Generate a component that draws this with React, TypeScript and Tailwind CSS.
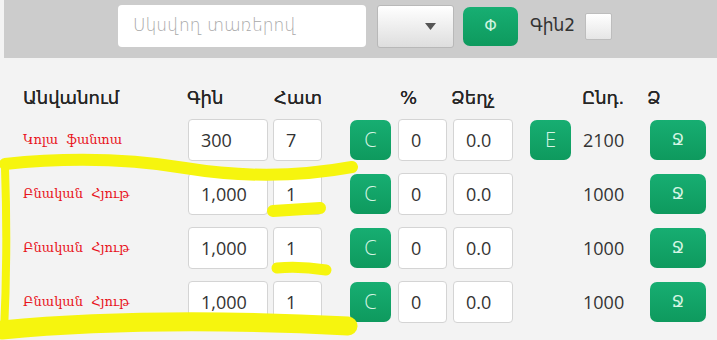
import React from "react";

type Row = {
  name: string;
  price: string;
  qty: string;
  total: string;
  extra?: boolean;
};

const rows: Row[] = [
  { name: "Կոլա  ֆանտա", price: "300", qty: "7", total: "2100", extra: true },
  { name: "Բնական  Հյութ", price: "1,000", qty: "1", total: "1000" },
  { name: "Բնական  Հյութ", price: "1,000", qty: "1", total: "1000" },
  { name: "Բնական  Հյութ", price: "1,000", qty: "1", total: "1000" },
];

const num = "font-['Open_Sans','DejaVu_Sans',sans-serif] text-[18px] text-[#333]";
const arm = "font-['DejaVu_Sans',sans-serif]";

function Box({ value, width }: { value: string; width: string }) {
  return (
    <div
      className={`${width} h-[42px] bg-white border border-[#d4d4d4] rounded-[4px] flex items-center pl-[12px] ${num}`}
    >
      {value}
    </div>
  );
}

function GreenBtn({ label, width, small }: { label: string; width: string; small?: boolean }) {
  return (
    <div
      className={`${width} h-[40px] rounded-[7px] bg-gradient-to-b from-[#17ae72] to-[#0e9a5e] flex items-center justify-center text-[#d6f5e4] ${
        small ? `${arm} text-[16px]` : "font-['Open_Sans',sans-serif] font-light text-[20px]"
      }`}
    >
      {label}
    </div>
  );
}

export default function App() {
  return (
    <div className="relative w-[717px] h-[340px] bg-[#f3f3f3] overflow-hidden">
      {/* toolbar */}
      <div className="ml-[4px] h-[58px] bg-[#cccccc]">
        <div className="h-[52px] flex items-center pl-[114px]">
          <div className={`w-[248px] h-[42px] bg-white rounded-[4px] flex items-center pl-[15px] text-[17px] text-[#a8a8a8] font-light ${arm}`}>
            Սկսվող տառերով
          </div>
          <div className="ml-[11px] w-[77px] h-[43px] rounded-[3px] border border-[#b8b8b8] bg-gradient-to-b from-white to-[#dedede] flex items-center justify-end pr-[17px]">
            <svg width="11" height="7" viewBox="0 0 11 7">
              <path d="M0 0 L11 0 L5.5 7 Z" fill="#555" />
            </svg>
          </div>
          <div className="ml-[9px] w-[55px] h-[39px] rounded-[7px] bg-gradient-to-b from-[#17ae72] to-[#0e9a5e] flex items-center justify-center text-[#cdf3de] text-[16px] font-['DejaVu_Sans',sans-serif]">
            Φ
          </div>
          <div className={`ml-[12px] text-[17px] text-[#333] ${arm}`}>Գին2</div>
          <div className="ml-[10px] w-[27px] h-[27px] rounded-[2px] border border-[#bdbdbd] bg-gradient-to-b from-white to-[#e6e6e6]" />
        </div>
      </div>

      {/* header */}
      <div className={`mt-[19px] h-[40px] flex items-center pl-[23px] text-[18px] text-[#262626] [text-shadow:0_0_0.6px_#262626] ${arm}`}>
        <div className="w-[164px]">Անվանում</div>
        <div className="w-[87px]">Գին</div>
        <div className="w-[126px]">Հատ</div>
        <div className="w-[51px]">%</div>
        <div className="w-[131px]">Ձեղչ</div>
        <div className="w-[65px]">Ընդ.</div>
        <div>Ձ</div>
      </div>

      {/* rows */}
      <div className="mt-[2px] flex flex-col gap-[12px]">
        {rows.map((r, i) => (
          <div key={i} className="h-[42px] flex items-center pl-[23px]">
            <div className="w-[165px] text-[13px] text-[#e8141c] font-['DejaVu_Serif',serif] whitespace-pre">
              {r.name}
            </div>
            <Box value={r.price} width="w-[80px]" />
            <div className="w-[5px]" />
            <Box value={r.qty} width="w-[49px]" />
            <div className="w-[28px]" />
            <GreenBtn label="C" width="w-[41px]" />
            <div className="w-[7px]" />
            <Box value="0" width="w-[49px]" />
            <div className="w-[6px]" />
            <Box value="0.0" width="w-[60px]" />
            <div className="w-[17px]" />
            {r.extra ? <GreenBtn label="E" width="w-[41px]" /> : <div className="w-[41px]" />}
            <div className={`w-[79px] pl-[12px] ${num}`}>{r.total}</div>
            <GreenBtn label="Ջ" width="w-[56px]" small />
          </div>
        ))}
      </div>

      {/* hand-drawn highlight marks */}
      <svg
        className="absolute inset-0 pointer-events-none"
        width="717"
        height="340"
        viewBox="0 0 717 340"
      >
        <g fill="none" stroke="#f6f50e" strokeLinecap="round" strokeLinejoin="round">
          <path d="M5 164 Q 100 154 185 168 T 352 167" strokeWidth="12" />
          <path d="M5 168 Q 8 250 4 332" strokeWidth="8" />
          <path d="M2 330 Q 150 316 348 326" strokeWidth="19" />
          <path d="M273 211 L 320 208" strokeWidth="12" />
          <path d="M277 268 Q 300 266 326 270" strokeWidth="11" />
        </g>
      </svg>
    </div>
  );
}
